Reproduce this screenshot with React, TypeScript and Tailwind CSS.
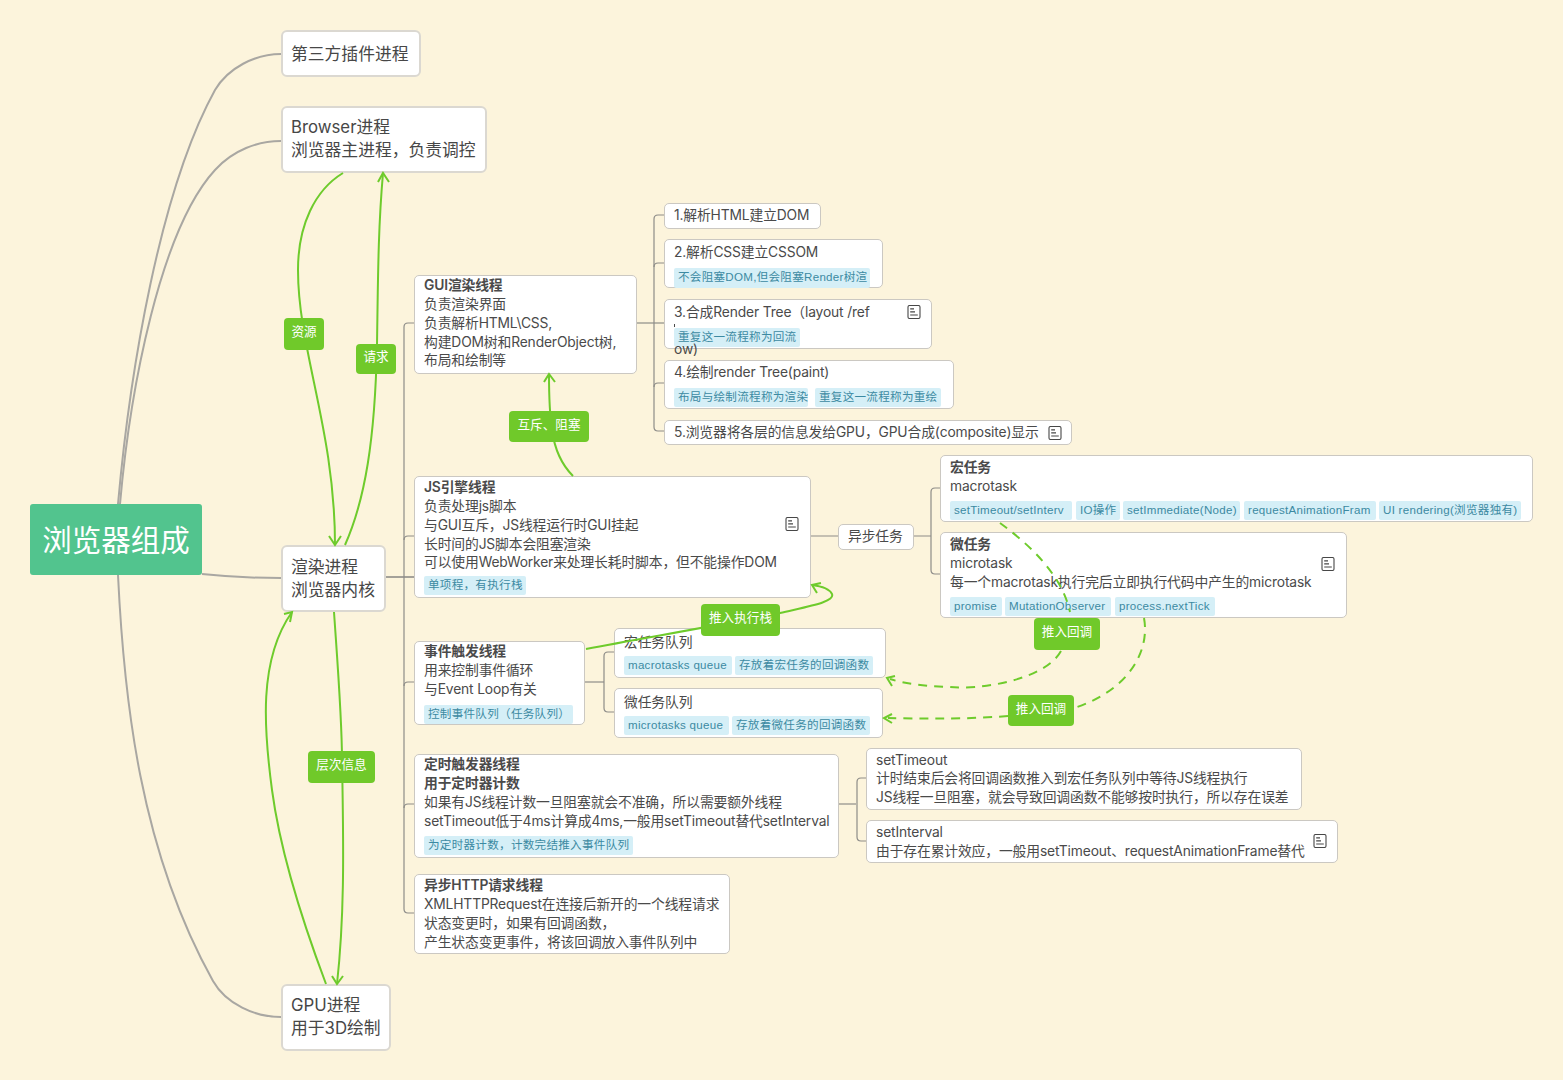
import React from "react";

const Note = ({ className }: { className: string }) => (
  <svg className={`absolute ${className}`} width="14" height="14" viewBox="0 0 14 14" fill="none" stroke="#474747">
    <rect x="1" y="0.5" width="12" height="13" rx="1.5" strokeWidth="1.1" />
    <path d="M3.2 3.8H7M3.2 6.8H8M3.2 10H10.8" strokeWidth="1.2" />
  </svg>
);

const Top = ({ className, children }: { className: string; children: React.ReactNode }) => (
  <div className={`absolute flex flex-col justify-center bg-white border-2 border-[#dbd8d1] rounded-[6px] px-[8px] text-[16.8px] leading-[22.6px] text-[#474747] whitespace-nowrap ${className}`}>
    {children}
  </div>
);

const Sub = ({ className, children }: { className: string; children: React.ReactNode }) => (
  <div className={`absolute bg-white border border-[#cbc8c2] rounded-[5px] px-[9px] text-[13.8px] leading-[18.85px] tracking-[-0.14px] text-[#4a4a4a] whitespace-nowrap ${className}`}>
    {children}
  </div>
);

const Tag = ({ className, children }: { className: string; children: React.ReactNode }) => (
  <span className={`block shrink-0 bg-[#d5eff7] rounded-[2px] pl-[4px] text-[11.57px] tracking-[0.28px] leading-[18px] text-[#3c8aa2] whitespace-nowrap [font-family:'Liberation_Sans','Noto_Sans_CJK_SC',sans-serif] ${className}`}>
    {children}
  </span>
);

const Label = ({ className, children }: { className: string; children: React.ReactNode }) => (
  <div className={`absolute flex items-center justify-center pb-[3px] bg-[#70c92a] rounded-[4px] text-white text-[12.6px] whitespace-nowrap ${className}`}>
    {children}
  </div>
);

const grey = "#a9a7a2";
const line = "#8d8c88";
const green = "#6ecb2c";

export default function App() {
  return (
    <div className="relative w-[1563px] h-[1080px] overflow-hidden bg-[#fcf4dc] [font-family:Inter,'Noto_Sans_CJK_SC',sans-serif]">
      {/* connectors below the nodes */}
      <svg className="absolute inset-0" width="1563" height="1080" fill="none">
        <g stroke={grey} strokeWidth="2">
          <path d="M118 504C130 370 160 190 215 90C228 68 255 54 281 54" />
          <path d="M120 504C130 390 160 230 215 170C233 150 258 141 281 141" />
          <path d="M202 574C230 577 255 578 281 578" />
          <path d="M118 575C124 700 140 850 213 981C226 1004 255 1017 281 1017" />
        </g>
        <g stroke={line} strokeWidth="1.2">
          <path d="M386 577H414" strokeWidth="1.6" />
          <path d="M414 323H408Q404 323 404 327V909Q404 913 408 913H414" />
          <path d="M404 540Q404 536 408 536H414M404 686Q404 682 408 682H414M404 808Q404 804 408 804H414" />
          <path d="M637 323H664" />
          <path d="M664 215H658Q654 215 654 219V427Q654 431 658 431H664" />
          <path d="M654 267Q654 263 658 263H664M654 387Q654 383 658 383H664" />
          <path d="M811 536H838M914 536H931" />
          <path d="M940 488H935Q931 488 931 492V570Q931 574 935 574H940" />
          <path d="M585 682H604" />
          <path d="M614 652H608Q604 652 604 656V708Q604 712 608 712H614" />
          <path d="M839 804H856" />
          <path d="M866 778H861Q857 778 857 782V837Q857 841 861 841H866" />
        </g>
      </svg>

      <div className="absolute left-[30px] top-[504px] w-[172px] h-[71px] flex items-center justify-center pt-[2px] rounded-[3px] bg-[#52c48e] text-white text-[29.5px]">
        浏览器组成
      </div>

      <Top className="left-[281px] top-[30px] w-[140px] h-[47px] pt-[1px]">第三方插件进程</Top>
      <Top className="left-[281px] top-[106px] w-[206px] h-[67px] pb-[2px]">
        <div>Browser进程</div>
        <div>浏览器主进程，负责调控</div>
      </Top>
      <Top className="left-[281px] top-[545px] w-[105px] h-[67px]">
        <div>渲染进程</div>
        <div>浏览器内核</div>
      </Top>
      <Top className="left-[281px] top-[984px] w-[110px] h-[67px] pb-[2px]">
        <div>GPU进程</div>
        <div>用于3D绘制</div>
      </Top>

      <Sub className="left-[414px] top-[275px] w-[223px] h-[99px]">
        <div className="font-semibold">GUI渲染线程</div>
        <div>负责渲染界面</div>
        <div>负责解析HTML\CSS,</div>
        <div>构建DOM树和RenderObject树,</div>
        <div>布局和绘制等</div>
      </Sub>

      <Sub className="left-[664px] top-[203px] w-[157px] h-[26px] flex items-center pb-[2px]">1.解析HTML建立DOM</Sub>
      <Sub className="left-[664px] top-[239px] w-[219px] h-[49px] pt-[3px]">
        <div>2.解析CSS建立CSSOM</div>
        <div className="flex mt-[6px]">
          <Tag className="w-[196px] h-[20px]">不会阻塞DOM,但会阻塞Render树渲</Tag>
        </div>
      </Sub>
      <Sub className="left-[664px] top-[299px] w-[268px] h-[50px] pt-[3px]">
        <div>3.合成Render Tree（layout /ref</div>
        <span className="absolute left-[9px] top-[24px] w-px h-[3px] bg-[#4a4a4a]" />
        <div className="flex mt-[6px]">
          <Tag className="w-[126px] h-[19px]">重复这一流程称为回流</Tag>
        </div>
        <Note className="left-[242px] top-[5px]" />
        <span className="absolute left-[9px] top-[40px]">ow)</span>
      </Sub>
      <Sub className="left-[664px] top-[360px] w-[290px] h-[49px] pt-[2px]">
        <div>4.绘制render Tree(paint)</div>
        <div className="flex gap-[7px] mt-[6px]">
          <Tag className="w-[134px] h-[19px]">布局与绘制流程称为渲染</Tag>
          <Tag className="w-[126px] h-[19px]">重复这一流程称为重绘</Tag>
        </div>
      </Sub>
      <Sub className="left-[664px] top-[420px] w-[408px] h-[25px] flex items-center">
        5.浏览器将各层的信息发给GPU，GPU合成(composite)显示
        <Note className="left-[383px] top-[5px]" />
      </Sub>

      <Sub className="left-[414px] top-[476px] w-[397px] h-[122px] pt-[1px]">
        <div className="font-semibold">JS引擎线程</div>
        <div>负责处理js脚本</div>
        <div>与GUI互斥，JS线程运行时GUI挂起</div>
        <div>长时间的JS脚本会阻塞渲染</div>
        <div>可以使用WebWorker来处理长耗时脚本，但不能操作DOM</div>
        <div className="flex mt-[4px]">
          <Tag className="w-[102px] h-[19px]">单项程，有执行栈</Tag>
        </div>
        <Note className="left-[370px] top-[40px]" />
      </Sub>

      <Sub className="left-[838px] top-[524px] w-[76px] h-[26px] flex items-center pb-[2px]">异步任务</Sub>

      <Sub className="left-[940px] top-[455px] w-[593px] h-[67px] pt-[2px]">
        <div className="font-semibold">宏任务</div>
        <div>macrotask</div>
        <div className="flex mt-[5px]">
          <Tag className="w-[122px] h-[19px] mr-[4px]">setTimeout/setInterv</Tag>
          <Tag className="w-[44px] h-[19px] mr-[3px]">IO操作</Tag>
          <Tag className="w-[117px] h-[19px] mr-[4px]">setImmediate(Node)</Tag>
          <Tag className="w-[132px] h-[19px] mr-[3px]">requestAnimationFram</Tag>
          <Tag className="w-[142px] h-[19px]">UI rendering(浏览器独有)</Tag>
        </div>
      </Sub>

      <Sub className="left-[940px] top-[532px] w-[407px] h-[86px] pt-[2px]">
        <div className="font-semibold">微任务</div>
        <div>microtask</div>
        <div>每一个macrotask执行完后立即执行代码中产生的microtask</div>
        <div className="flex mt-[5px]">
          <Tag className="w-[52px] h-[19px] mr-[3px]">promise</Tag>
          <Tag className="w-[106px] h-[19px] mr-[4px]">MutationObserver</Tag>
          <Tag className="w-[100px] h-[19px]">process.nextTick</Tag>
        </div>
        <Note className="left-[380px] top-[24px]" />
      </Sub>

      <Sub className="left-[414px] top-[641px] w-[171px] h-[84px]">
        <div className="font-semibold">事件触发线程</div>
        <div>用来控制事件循环</div>
        <div>与Event Loop有关</div>
        <div className="flex mt-[6px]">
          <Tag className="w-[149px] h-[19px]">控制事件队列（任务队列）</Tag>
        </div>
      </Sub>

      <Sub className="left-[614px] top-[628px] w-[272px] h-[50px] pt-[4px]">
        <div>宏任务队列</div>
        <div className="flex gap-[3px] mt-[4px]">
          <Tag className="w-[108px] h-[19px]">macrotasks queue</Tag>
          <Tag className="w-[138px] h-[19px]">存放着宏任务的回调函数</Tag>
        </div>
      </Sub>
      <Sub className="left-[614px] top-[688px] w-[269px] h-[50px] pt-[4px]">
        <div>微任务队列</div>
        <div className="flex gap-[3px] mt-[4px]">
          <Tag className="w-[105px] h-[19px]">microtasks queue</Tag>
          <Tag className="w-[138px] h-[19px]">存放着微任务的回调函数</Tag>
        </div>
      </Sub>

      <Sub className="left-[414px] top-[754px] w-[425px] h-[104px]">
        <div className="font-semibold">定时触发器线程</div>
        <div className="font-semibold">用于定时器计数</div>
        <div>如果有JS线程计数一旦阻塞就会不准确，所以需要额外线程</div>
        <div>setTimeout低于4ms计算成4ms,一般用setTimeout替代setInterval</div>
        <div className="flex mt-[6px]">
          <Tag className="w-[209px] h-[19px]">为定时器计数，计数完结推入事件队列</Tag>
        </div>
      </Sub>

      <Sub className="left-[414px] top-[874px] w-[316px] h-[80px] pt-[1px]">
        <div className="font-semibold">异步HTTP请求线程</div>
        <div>XMLHTTPRequest在连接后新开的一个线程请求</div>
        <div>状态变更时，如果有回调函数，</div>
        <div>产生状态变更事件，将该回调放入事件队列中</div>
      </Sub>

      <Sub className="left-[866px] top-[748px] w-[436px] h-[62px] pt-[1.5px]">
        <div>setTimeout</div>
        <div>计时结束后会将回调函数推入到宏任务队列中等待JS线程执行</div>
        <div>JS线程一旦阻塞，就会导致回调函数不能够按时执行，所以存在误差</div>
      </Sub>
      <Sub className="left-[866px] top-[820px] w-[472px] h-[43px] pt-[2px]">
        <div>setInterval</div>
        <div>由于存在累计效应，一般用setTimeout、requestAnimationFrame替代</div>
        <Note className="left-[446px] top-[13px]" />
      </Sub>

      {/* relation arrows above the nodes */}
      <svg className="absolute inset-0" width="1563" height="1080" fill="none" stroke={green} strokeWidth="2">
        <path d="M343 173C315 190 298 225 298 270C298 350 335 430 335 545" />
        <path d="M329 536L335 545L341 536" />
        <path d="M345 545C365 500 375 440 377 345C378 280 378 230 383 173" />
        <path d="M378 182L383 173L389 182" />
        <path d="M573 476C562 465 555 452 552 430C549 410 549 395 549 374" />
        <path d="M544 382L549 374L555 382" />
        <path d="M586 649C650 637 720 625 780 613C810 606 835 602 832 594C829 588 820 586 812 585" />
        <path d="M821 583L812 585L817 593" />
        <path d="M334 612C338 670 342 720 342 760C344 860 344 920 337 984" />
        <path d="M332 976L337 984L343 976" />
        <path d="M326 984C300 915 280 850 272 790C264 730 258 660 292 612" />
        <path d="M284 614L292 612L290 622" />
        <g strokeDasharray="9 7">
          <path d="M1000 523C1030 545 1062 575 1070 612" />
          <path d="M1061 651C1045 680 980 690 950 687C925 686 905 684 890 679" />
          <path d="M1144 618C1150 650 1130 690 1074 708" />
          <path d="M1008 716C970 719 930 719 888 718" />
        </g>
        <path d="M895 676L887 678L892 686" />
        <path d="M892 714L884 718L892 723" />
      </svg>

      <Label className="left-[284px] top-[318px] w-[40px] h-[32px]">资源</Label>
      <Label className="left-[356px] top-[344px] w-[40px] h-[30px]">请求</Label>
      <Label className="left-[509px] top-[411px] w-[80px] h-[31px]">互斥、阻塞</Label>
      <Label className="left-[701px] top-[604px] w-[79px] h-[32px]">推入执行栈</Label>
      <Label className="left-[1034px] top-[618px] w-[66px] h-[32px]">推入回调</Label>
      <Label className="left-[1008px] top-[695px] w-[66px] h-[31px]">推入回调</Label>
      <Label className="left-[308px] top-[751px] w-[67px] h-[32px]">层次信息</Label>
    </div>
  );
}
